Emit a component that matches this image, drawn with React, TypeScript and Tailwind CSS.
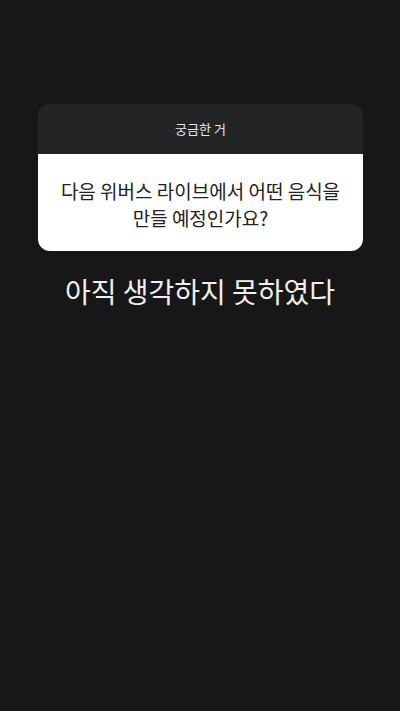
export default function App() {
  return (
    <div
      className="w-[400px] h-[711px] bg-[#171717] flex flex-col items-center pt-[104px]"
      style={{ fontFamily: '"Noto Sans CJK KR", "Noto Sans", sans-serif' }}
    >
      <div className="w-[325px] ml-[1px] rounded-[12px] overflow-hidden">
        <div className="h-[50px] bg-[#222426] flex items-center justify-center text-[13px] text-[#e8e8e8]">
          궁금한 거
        </div>
        <div className="h-[97px] bg-white flex items-center justify-center text-center text-[19px] leading-[27px] text-[#222] px-4 pt-[2px]">
          다음 위버스 라이브에서 어떤 음식을
          <br />
          만들 예정인가요?
        </div>
      </div>
      <div className="mt-[22px] text-[28px] leading-[36px] text-[#f0f0f0]">
        아직 생각하지 못하였다
      </div>
    </div>
  );
}
